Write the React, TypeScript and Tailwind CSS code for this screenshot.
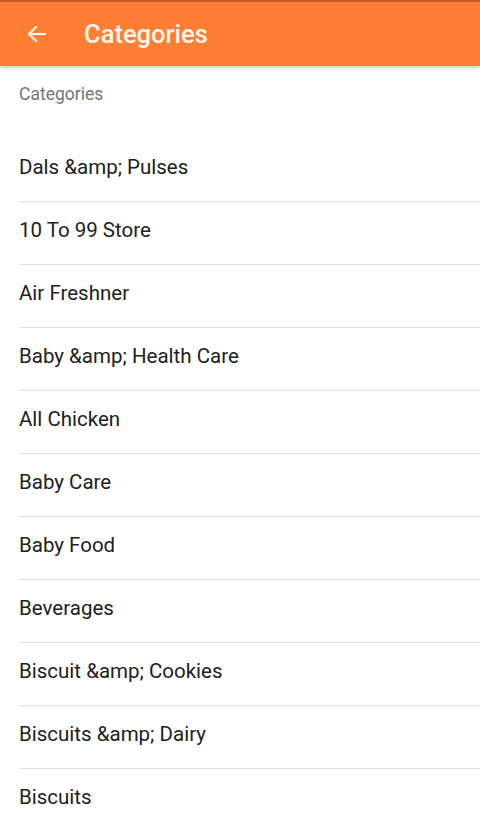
import React from 'react';

const categories = [
  'Dals &amp; Pulses',
  '10 To 99 Store',
  'Air Freshner',
  'Baby &amp; Health Care',
  'All Chicken',
  'Baby Care',
  'Baby Food',
  'Beverages',
  'Biscuit &amp; Cookies',
  'Biscuits &amp; Dairy',
  'Biscuits',
];

function BackArrow() {
  return (
    <svg width="24" height="24" viewBox="0 0 24 24" fill="none" stroke="currentColor" strokeWidth="2.2" strokeLinecap="square">
      <path d="M20 12H5" />
      <path d="M11 5l-7 7 7 7" />
    </svg>
  );
}

export default function App() {
  return (
    <div className="w-[480px] h-[826px] overflow-hidden bg-white font-['Roboto',sans-serif]">
      <header className="relative z-10 h-[66px] bg-[#fe7f33] border-t-2 border-[#c4592b] flex items-center shadow-[0_2px_3px_rgba(0,0,0,0.18)]">
        <div className="w-[84px] pl-[25px] text-[#fff6ea]">
          <BackArrow />
        </div>
        <h1 className="text-[25.5px] font-medium text-[#fff6ea]">Categories</h1>
      </header>
      <div className="h-[73px] pl-[19px] pt-[15px] text-[17.5px] text-[#757575]">Categories</div>
      <ul>
        {categories.map((c, i) => (
          <li key={c} className="pl-[19px]">
            <div className={`h-[63px] flex items-center text-[20.5px] text-[#212121] pb-[6px] ${i < categories.length - 1 ? 'border-b border-[#e0e0e0]' : ''}`}>
              {c}
            </div>
          </li>
        ))}
      </ul>
    </div>
  );
}
